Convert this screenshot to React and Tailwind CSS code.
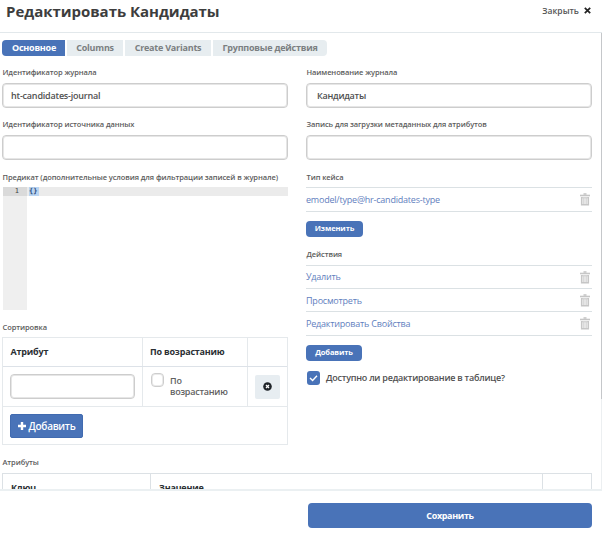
import React from "react";

function Label({ children, className = "" }) {
  return (
    <div className={`flex h-4 items-center whitespace-nowrap pl-[0.5px] text-[7.5px] font-semibold tracking-[-0.09px] text-[#5c5c5c] ${className}`}>
      <span>{children}</span>
    </div>
  );
}

function Field({ children, className = "" }) {
  return (
    <div className={`flex items-center rounded-[4px] border border-[#cdcdcd] bg-white font-semibold text-[#505050] shadow-[inset_0_0_0_1px_#e6e6e6] ${className}`}>
      {children}
    </div>
  );
}

function Trash() {
  return (
    <svg className="mr-[2px] h-[13px] w-[10px]" viewBox="0 0 10 13" fill="none" stroke="#c6c6c6">
      <path d="M0 2.5h10" strokeWidth="1.6" />
      <path d="M3.5 1h3" strokeWidth="1.6" />
      <path d="M1.7 4v7.7h6.6V4" strokeWidth="1.6" />
      <path d="M1 4.7h8M3.9 5v7M6.1 5v7" strokeWidth="1.1" />
    </svg>
  );
}

function Item({ children, className = "" }) {
  return (
    <div className={`flex items-center justify-between border-b border-[#dbe1e4] text-[9px] tracking-[-0.21px] text-[#5f80be] ${className}`}>
      <span className="whitespace-nowrap">{children}</span>
      <Trash />
    </div>
  );
}

function SmallButton({ children, className = "" }) {
  return (
    <button className={`flex h-4 items-center justify-center rounded-[4px] bg-[#4973b8] text-[7.5px] font-bold tracking-[-0.1px] text-white ${className}`}>
      {children}
    </button>
  );
}

function LeftColumn() {
  return (
    <div className="w-[286px]">
      <Label>Идентификатор журнала</Label>
      <Field className="mt-[2px] h-[25px] pl-[8px] text-[9px] tracking-[-0.2px]">ht-candidates-journal</Field>
      <Label className="mt-[9px]">Идентификатор источника данных</Label>
      <Field className="mt-[2px] h-[25px]" />
      <Label className="mt-[9px] pt-px">Предикат (дополнительные условия для фильтрации записей в журнале)</Label>
      <div className="ml-px mt-[2px] flex h-[123px] text-[7px]">
        <div className="w-6 bg-[#efefef]">
          <div className="flex h-[9px] items-center justify-end bg-[#dadada] pr-[8px] font-['DejaVu_Sans_Mono',monospace] text-[#444]">1</div>
        </div>
        <div className="flex h-[9px] flex-1 items-center bg-[#ebebeb] pl-[2px]">
          <span className="flex h-[9px] w-[10px] items-center bg-[#b9d4f1] font-['DejaVu_Sans_Mono',monospace] text-[7px] font-bold text-[#2f4d7c]">{"{}"}</span>
        </div>
      </div>
      <Label className="mt-[9px] pt-px">Сортировка</Label>
      <div className="mt-[2px] h-[108px] border border-[#e5e9ec] text-[9px]">
        <div className="grid h-[29px] grid-cols-[140px_105px_39px] border-b border-[#dde2e8] font-bold tracking-[-0.2px] text-[#2b2f33]">
          <div className="flex items-center border-r border-[#e5e9ec] pl-[7.5px]">Атрибут</div>
          <div className="flex items-center border-r border-[#e5e9ec] pl-[7px]">По возрастанию</div>
          <div />
        </div>
        <div className="grid h-[40px] grid-cols-[140px_105px_39px] border-b border-[#e5e9ec]">
          <div className="flex items-center border-r border-[#e5e9ec] pl-[7px]">
            <Field className="h-[25px] w-[125px]" />
          </div>
          <div className="flex border-r border-[#e5e9ec] pl-[8px] pt-[6px]">
            <div className="h-[14px] w-[13px] shrink-0 rounded-[4px] border border-[#cdcdcd] shadow-[inset_0_0_0_1px_#eaeaea]" />
            <p className="w-[66px] pl-[6px] pt-[2px] font-semibold leading-[11px] tracking-[-0.25px] text-[#616161]">По возрастанию</p>
          </div>
          <div className="flex items-center pl-[7px]">
            <button className="flex h-6 w-[25px] items-center justify-center rounded-[2px] bg-[#e7edf1]">
              <svg className="h-[9px] w-[9px]" viewBox="0 0 9 9">
                <circle cx="4.5" cy="4.5" r="4.3" fill="#20252a" />
                <path d="M3 3l3 3M6 3L3 6" stroke="#fff" strokeWidth="1.3" />
              </svg>
            </button>
          </div>
        </div>
        <button className="ml-[7px] mt-[7px] flex h-[24px] w-[73px] items-center justify-center gap-[3px] rounded-[2px] border border-[#416bb0] bg-[#4973b8] text-[10px] font-semibold tracking-[-0.3px] text-white">
          <svg className="h-[8px] w-[8px]" viewBox="0 0 8 8"><path d="M4 0v8M0 4h8" stroke="white" strokeWidth="2.4" /></svg>
          <span>Добавить</span>
        </button>
      </div>
    </div>
  );
}

function RightColumn() {
  return (
    <div className="w-[286px]">
      <Label>Наименование журнала</Label>
      <Field className="mt-[2px] h-[25px] pl-[10px] pt-px text-[9px] tracking-[-0.25px]">Кандидаты</Field>
      <Label className="mt-[9px]">Запись для загрузки метаданных для атрибутов</Label>
      <Field className="mt-[2px] h-[25px]" />
      <Label className="mt-[9px] pt-px">Тип кейса</Label>
      <Item className="mt-[2px] h-[25px] border-t">emodel/type@hr-candidates-type</Item>
      <SmallButton className="mt-[9px] w-[57px]">Изменить</SmallButton>
      <Label className="mt-[9px] pt-px">Действия</Label>
      <Item className="mt-[3px] h-[24px] border-t">Удалить</Item>
      <Item className="h-[23px] pt-px">Просмотреть</Item>
      <Item className="h-[24px]">Редактировать Свойства</Item>
      <SmallButton className="mt-[9px] w-[56px]">Добавить</SmallButton>
      <div className="mt-[9px] flex h-[15px] items-center gap-[6px] pl-px text-[9px] font-semibold tracking-[-0.24px] text-[#505050]">
        <svg className="h-[14px] w-[13px] rounded-[3px] bg-[#4973b8]" viewBox="0 0 13 14">
          <path d="M3 7L5.6 9.5 10 4.8" stroke="white" strokeWidth="1.4" fill="none" />
        </svg>
        <span>Доступно ли редактирование в таблице?</span>
      </div>
    </div>
  );
}

export default function App() {
  return (
    <div className="h-[539px] w-[602px] overflow-hidden bg-white font-['Open_Sans',sans-serif]">
      <header className="flex h-[33px] items-start justify-between border-b border-[#e2e8eb] pl-[6px] pr-[11px]">
        <h1 className="text-[15px] font-bold leading-[22px] tracking-[-0.03px] text-[#3d3d3d]">Редактировать Кандидаты</h1>
        <div className="mt-[4px] flex items-center gap-[5px] text-[8.5px] font-semibold leading-[13px] text-[#555]">
          <span>Закрыть</span>
          <svg className="h-[7px] w-[7px]" viewBox="0 0 7 7"><path d="M.8.8l5.4 5.4M6.2.8L.8 6.2" stroke="#222" strokeWidth="1.7" /></svg>
        </div>
      </header>
      <div className="flex h-[456px] overflow-hidden">
        <main className="w-[601px] shrink-0 pl-[2px] pt-[7px]">
          <nav className="flex h-4 gap-[2px] text-[9px] font-bold tracking-[-0.22px] text-[#7b7f81]">
            <div className="flex w-[63px] items-center justify-center rounded-l-[4px] bg-[#4973b8] pl-px text-white">Основное</div>
            <div className="flex w-[56px] items-center justify-center bg-[#e7edf0]">Columns</div>
            <div className="flex w-[86px] items-center justify-center bg-[#e7edf0]">Create Variants</div>
            <div className="flex w-[114px] items-center justify-center rounded-r-[4px] bg-[#e7edf0]">Групповые действия</div>
          </nav>
          <div className="mt-[9px] flex gap-[18px]">
            <LeftColumn />
            <RightColumn />
          </div>
          <Label className="mt-[9px] pt-px">Атрибуты</Label>
          <div className="mt-[3px] grid h-[40px] w-[590px] grid-cols-[148px_392px_48px] border border-[#dce1e5] text-[9px] font-bold leading-3 tracking-[-0.2px] text-[#2b2f33]">
            <div className="border-r border-[#dce1e5] pl-[8px] pt-[8px]">Ключ</div>
            <div className="border-r border-[#dce1e5] pl-[8px] pt-[8px]">Значение</div>
            <div />
          </div>
        </main>
        <div className="w-px bg-[#eceff1]"><div className="h-[366px] bg-[#c5c7ca]" /></div>
      </div>
      <footer className="flex h-[50px] justify-end border-t-2 border-[#ebf0f2] pr-[10px] pt-[12px]">
        <button className="flex h-[25px] w-[284px] items-center justify-center rounded-[4px] bg-[#4973b8] text-[9px] font-bold tracking-[-0.35px] text-white">Сохранить</button>
      </footer>
    </div>
  );
}
